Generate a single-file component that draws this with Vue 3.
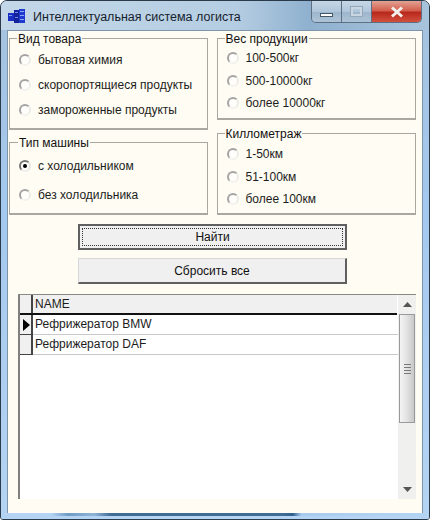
<script setup>
const goods = ['бытовая химия', 'скоропортящиеся продукты', 'замороженные продукты'];
const weights = ['100-500кг', '500-10000кг', 'более 10000кг'];
const machines = ['с холодильником', 'без холодильника'];
const distances = ['1-50км', '51-100км', 'более 100км'];
const rows = ['Рефрижератор BMW', 'Рефрижератор DAF'];
</script>

<template>
  <div class="window">
    <div class="titlebar">
      <svg class="app-icon" width="17" height="15" viewBox="0 0 17 15">
        <rect x="0" y="4" width="6" height="8" fill="#1c2fc4" />
        <rect x="1" y="6" width="3" height="1" fill="#7f9cf0" />
        <rect x="6" y="1" width="5" height="13" fill="#14209c" />
        <rect x="7" y="3" width="3" height="1" fill="#6f8ee8" />
        <rect x="7" y="8" width="3" height="1" fill="#6f8ee8" />
        <rect x="11" y="0" width="6" height="14" fill="#1f3ad0" />
        <rect x="12" y="2" width="4" height="1" fill="#8fa9f0" />
        <rect x="12" y="6" width="4" height="1" fill="#8fa9f0" />
        <rect x="12" y="10" width="4" height="1" fill="#8fa9f0" />
      </svg>
      <span class="title">Интеллектуальная система логиста</span>
      <div class="caption">
        <div class="cap-btn cap-min"><span class="min-glyph"></span></div>
        <div class="cap-btn cap-max"><span class="max-glyph"></span></div>
        <div class="cap-btn cap-close">
          <svg width="16" height="12" viewBox="0 0 16 12">
            <path d="M3 1.5 L13 10.5 M13 1.5 L3 10.5" stroke="#f4f0ee" stroke-width="3" fill="none" />
          </svg>
        </div>
      </div>
    </div>

    <div class="client">
      <div class="groups">
        <div class="col">
          <div class="group group-goods">
            <div class="group-title">Вид товара</div>
            <div v-for="item in goods" :key="item" class="radio">
              <span class="dot"></span>{{ item }}
            </div>
          </div>
          <div class="group group-machine">
            <div class="group-title">Тип машины</div>
            <div v-for="(item, i) in machines" :key="item" class="radio">
              <span class="dot" :class="{ checked: i === 0 }"></span>{{ item }}
            </div>
          </div>
        </div>
        <div class="col">
          <div class="group group-weight">
            <div class="group-title">Вес продукции</div>
            <div v-for="item in weights" :key="item" class="radio">
              <span class="dot"></span>{{ item }}
            </div>
          </div>
          <div class="group group-weight group-km">
            <div class="group-title">Киллометраж</div>
            <div v-for="item in distances" :key="item" class="radio">
              <span class="dot"></span>{{ item }}
            </div>
          </div>
        </div>
      </div>

      <div class="actions">
        <button class="btn btn-focus"><span>Найти</span></button>
        <button class="btn">Сбросить все</button>
      </div>

      <div class="grid">
        <div class="grid-main">
          <div class="grid-row grid-head">
            <div class="indicator"></div>
            <div class="cell">NAME</div>
          </div>
          <div v-for="(row, i) in rows" :key="row" class="grid-row">
            <div class="indicator">
              <svg v-if="i === 0" width="8" height="12" viewBox="0 0 8 12"><path d="M1 0 L8 6 L1 12 Z" fill="#000" /></svg>
            </div>
            <div class="cell">{{ row }}</div>
          </div>
        </div>
        <div class="scrollbar">
          <div class="sb-btn"><svg width="9" height="5" viewBox="0 0 9 5"><path d="M4.5 0 L9 5 L0 5 Z" fill="#555" /></svg></div>
          <div class="thumb">
            <div class="grip"><i></i><i></i><i></i><i></i></div>
          </div>
          <div class="track"></div>
          <div class="sb-btn"><svg width="9" height="5" viewBox="0 0 9 5"><path d="M0 0 L9 0 L4.5 5 Z" fill="#555" /></svg></div>
        </div>
      </div>
    </div>
    <div class="frame-bottom"></div>
  </div>
</template>

<style scoped>
.window {
  width: 430px;
  height: 520px;
  box-sizing: border-box;
  border: 1px solid #2b3a48;
  border-radius: 7px 7px 3px 3px;
  background: linear-gradient(180deg, #b4cbdf 0, #a5c3e0 30px, #a4c8ee 200px, #b5d4f3 100%);
  display: flex;
  flex-direction: column;
  font-family: "Liberation Sans", Arial, sans-serif;
  font-size: 12px;
  color: #111;
  overflow: hidden;
}
.titlebar {
  height: 29px;
  flex: none;
  display: flex;
  align-items: flex-start;
  padding-left: 7px;
  background: linear-gradient(90deg, #c3d7e8 0, #b5cde2 55%, #8fb1cf 72%, #a8c4dc 100%);
}
.app-icon {
  margin-top: 8px;
  margin-right: 8px;
}
.title {
  margin-top: 9px;
  color: #15222e;
  font-size: 12.5px;
  line-height: 15px;
}
.caption {
  margin-left: auto;
  margin-right: 7px;
  display: flex;
  height: 22px;
  box-sizing: border-box;
  border: 1px solid #5d6f80;
  border-top: none;
  border-radius: 0 0 5px 5px;
  overflow: hidden;
}
.cap-btn {
  display: flex;
  align-items: center;
  justify-content: center;
}
.cap-min,
.cap-max {
  width: 29px;
  background: linear-gradient(180deg, #c6d7e6 0, #b0c6da 50%, #9db5cb 52%, #adc3d8 100%);
  border-right: 1px solid #5d6f80;
}
.min-glyph {
  width: 13px;
  height: 4px;
  margin-top: 7px;
  background: #fff;
  border: 1px solid #44586a;
  box-sizing: border-box;
}
.max-glyph {
  width: 11px;
  height: 9px;
  box-sizing: border-box;
  border: 2px solid #c9d6e2;
  outline: 1px solid #93a8bb;
}
.cap-close {
  width: 49px;
  background: linear-gradient(180deg, #e2a294 0, #d4604f 45%, #b8281c 55%, #d2503e 100%);
}
.client {
  flex: 1;
  margin: 0 6px;
  box-sizing: border-box;
  border: 1px solid #7d95ab;
  border-bottom: none;
  background: #fffcf3;
  padding: 7px 6px 0 1px;
  min-height: 0;
}
.groups {
  display: flex;
  gap: 9px;
}
.col {
  width: 199px;
  display: flex;
  flex-direction: column;
  justify-content: space-between;
  height: 177px;
}
.col + .col {
  width: 200px;
}
.group {
  box-sizing: border-box;
  border: 1px solid #a8a8a0;
  border-bottom-width: 2px;
  padding-left: 9px;
  display: flex;
  flex-direction: column;
}
.group-goods {
  height: 92px;
  gap: 6px;
}
.group-machine {
  height: 73px;
  gap: 10px;
}
.group-weight {
  height: 82px;
  gap: 3.5px;
}
.group-title {
  align-self: flex-start;
  margin: -7px 0 -2px -2px;
  background: #fffcf3;
  padding: 0 1px;
  line-height: 14px;
  height: 14px;
}
.group-machine .group-title {
  margin-bottom: -4px;
  margin-left: -1px;
}
.group-weight .group-title {
  margin-bottom: -1px;
}
.group-km .group-title {
  margin-bottom: 0;
}
.radio {
  height: 19px;
  display: flex;
  align-items: center;
  gap: 7px;
  white-space: nowrap;
  color: #1c1c1c;
}
.dot {
  width: 12px;
  height: 12px;
  box-sizing: border-box;
  flex: none;
  border-radius: 50%;
  background: #fffefa;
  border: 2px solid;
  border-color: #a4a4a4 #ecece8 #f2f2ee #a4a4a4;
  position: relative;
}
.dot.checked {
  border-color: #777 #e4e4e0 #eeeeea #777;
}
.dot.checked::after {
  content: '';
  position: absolute;
  left: 2px;
  top: 2px;
  width: 4px;
  height: 4px;
  border-radius: 50%;
  background: #000;
}
.actions {
  display: flex;
  flex-direction: column;
  align-items: center;
  gap: 8px;
  padding: 9px 0 10px 0;
}
.btn {
  width: 269px;
  height: 26px;
  padding: 0;
  box-sizing: border-box;
  border: 1px solid #d8d8d8;
  border-right: 2px solid #606060;
  border-bottom: 2px solid #606060;
  background: #f0f0f0;
  font-family: inherit;
  font-size: 12px;
  color: #111;
}
.btn-focus {
  border: 2px solid #606060;
  padding: 2px;
}
.btn-focus span {
  display: flex;
  height: 100%;
  align-items: center;
  justify-content: center;
  border: 1px dotted #333;
  box-sizing: border-box;
}
.grid {
  margin-left: 9px;
  width: 398px;
  height: 205px;
  box-sizing: border-box;
  border-top: 1px solid #8a8a84;
  border-left: 2px solid #808080;
  display: flex;
  background: #fff;
}
.grid-main {
  flex: 1;
  min-width: 0;
}
.grid-row {
  display: flex;
  height: 19px;
  border-bottom: 1px solid #c8c8c8;
}
.grid-head {
  height: 18px;
  border-bottom: 2px solid #111;
  background: #f0f0f0;
  margin-right: 1px;
}
.indicator {
  width: 13px;
  flex: none;
  background: #f0f0f0;
  border-right: 2px solid #444;
  border-bottom: 1px solid #444;
  margin-bottom: -1px;
  display: flex;
  align-items: center;
  padding-left: 2px;
  box-sizing: border-box;
}
.grid-head .indicator {
  margin-bottom: 0;
  border-bottom: none;
  width: 13px;
}
.cell {
  padding-left: 2px;
  line-height: 18px;
  white-space: nowrap;
  color: #1c1c1c;
}
.scrollbar {
  width: 18px;
  flex: none;
  display: flex;
  flex-direction: column;
  background: #f0f0ee;
}
.sb-btn {
  height: 19px;
  flex: none;
  display: flex;
  align-items: center;
  justify-content: center;
}
.thumb {
  height: 109px;
  flex: none;
  margin: 0 1px;
  box-sizing: border-box;
  border: 1px solid #9a9a9a;
  background: linear-gradient(90deg, #f4f4f4 0, #e4e4e4 45%, #c8c8c8 100%);
  display: flex;
  align-items: center;
  justify-content: center;
}
.grip {
  display: flex;
  flex-direction: column;
  gap: 2px;
  width: 7px;
}
.grip i {
  height: 1px;
  background: #7a7a7a;
}
.track {
  flex: 1;
}
.frame-bottom {
  height: 6px;
  flex: none;
  margin: 0 -1px;
  border-top: 3px solid;
  box-sizing: border-box;
  border-image: linear-gradient(90deg, #b5d4f3 0, #b5d4f3 12%, #6f9cc4 16%, #8fb4d6 22%, #3f6b94 26%, #3f6b94 66%, #2f5f8c 68%, #a8cbee 70%, #b5d4f3 100%) 1;
  background: #b5d4f3;
}
</style>
